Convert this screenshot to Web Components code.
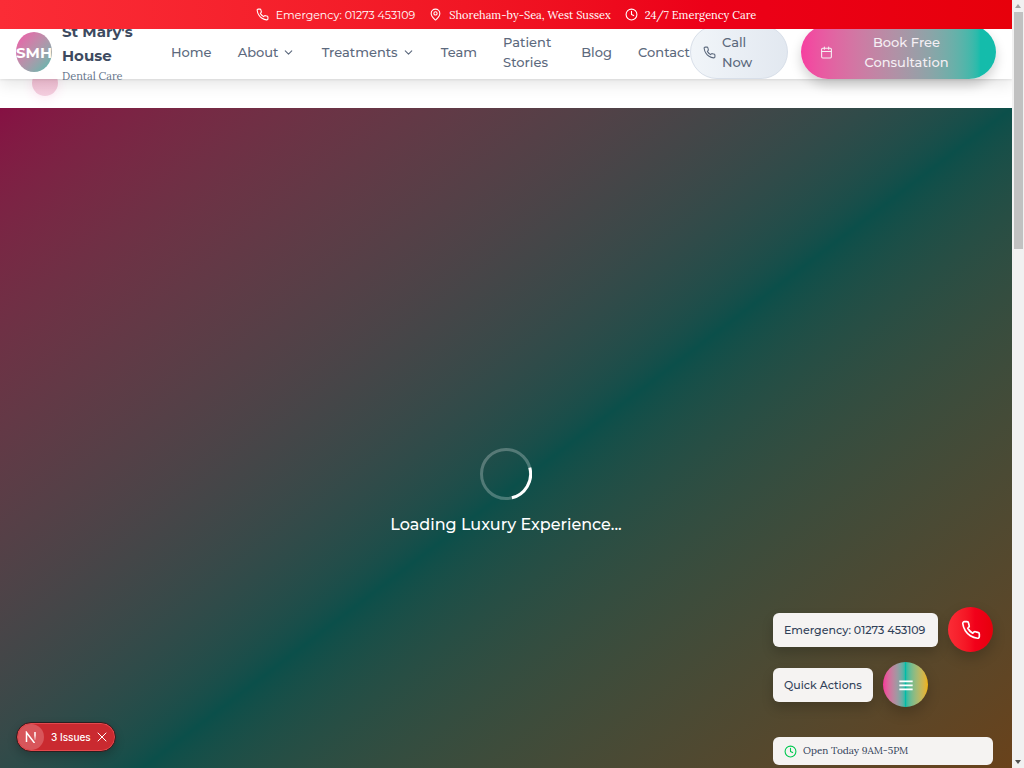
<!DOCTYPE html>
<html lang="en">
<head>
<meta charset="utf-8">
<meta name="viewport" content="width=device-width, initial-scale=1">
<title>St Mary's House Dental Care</title>
<style>
  :root {
    --sans: Montserrat, Inter, "Open Sans", sans-serif;
    --serif: Lora, "Liberation Serif", serif;
    --pink: #f6339a;
    --teal: #00bba7;
    --yellow: #f0b100;
  }
  body { margin: 0; background: #fff; font-family: var(--sans); color: #314158; }
</style>
</head>
<body>
<clinic-page></clinic-page>

<script>
const define = (name, markup, setup) => {
  customElements.define(name, class extends HTMLElement {
    constructor() {
      super();
      const t = document.createElement('template');
      t.innerHTML = markup;
      this.attachShadow({ mode: 'open' }).append(t.content.cloneNode(true));
    }
    connectedCallback() { if (setup) setup(this, this.shadowRoot); }
  });
};

const ICONS = {
  phone: '<path d="M22 16.92v3a2 2 0 0 1-2.18 2 19.8 19.8 0 0 1-8.63-3.07 19.5 19.5 0 0 1-6-6A19.8 19.8 0 0 1 2.12 4.18 2 2 0 0 1 4.11 2h3a2 2 0 0 1 2 1.72c.13.96.36 1.9.7 2.81a2 2 0 0 1-.45 2.11L8.09 9.91a16 16 0 0 0 6 6l1.27-1.27a2 2 0 0 1 2.11-.45c.91.34 1.85.57 2.81.7A2 2 0 0 1 22 16.92z"/>',
  pin: '<path d="M20 10c0 5-5.54 10.19-7.4 11.8a1 1 0 0 1-1.2 0C9.54 20.19 4 15 4 10a8 8 0 0 1 16 0"/><circle cx="12" cy="10" r="3"/>',
  clock: '<circle cx="12" cy="12" r="10"/><path d="M12 6v6l4 2"/>',
  calendar: '<path d="M8 2v4M16 2v4M3 10h18"/><rect x="3" y="4" width="18" height="18" rx="2"/>',
  chevron: '<path d="m6 9 6 6 6-6"/>',
  menu: '<path d="M2 6.5h20M2 12.5h20M2 18.5h20" stroke-width="2.6" stroke-linecap="butt"/>',
  close: '<path d="M4 4l16 16M20 4L4 20"/>'
};

define('ui-icon', `
  <style>
    :host { display: block; flex: none; width: 13px; height: 13px; }
    svg { display: block; width: 100%; height: 100%; fill: none; stroke: currentColor;
          stroke-width: 2; stroke-linecap: round; stroke-linejoin: round; }
  </style>
  <svg viewBox="0 0 24 24" aria-hidden="true"></svg>`,
  (el, root) => { root.querySelector('svg').innerHTML = ICONS[el.getAttribute('name')]; });

define('emergency-bar', `
  <style>
    :host { display: flex; align-items: center; justify-content: center; gap: 14px;
            position: relative; z-index: 3; height: 29px; color: #fff; font-size: 11px; line-height: 18px;
            background: linear-gradient(to right in oklab, #fb2c36, #ec0018 70%, #e7000b); }
    a, span { display: flex; align-items: center; gap: 7px; color: inherit; text-decoration: none; white-space: nowrap; }
    span { font-family: var(--serif); }
  </style>
  <a href="tel:01273453109"><ui-icon name="phone"></ui-icon>Emergency: 01273 453109</a>
  <span><ui-icon name="pin"></ui-icon>Shoreham-by-Sea, West Sussex</span>
  <span><ui-icon name="clock"></ui-icon>24/7 Emergency Care</span>`);

define('brand-logo', `
  <style>
    :host { display: block; }
    a { display: flex; align-items: center; gap: 10px; color: #3d4a60; text-decoration: none; }
    .mark { flex: none; display: grid; place-items: center; width: 36px; height: 40px; border-radius: 50%;
            background: linear-gradient(to bottom right in oklab, #f153a8, #3bbcad); color: #fff; font-size: 15px; font-weight: 700; }
    .name { width: 76px; font-size: 15px; font-weight: 700; line-height: 24px; }
    .sub { display: block; font-family: var(--serif); font-size: 11px; font-weight: 400; line-height: 16px; color: #66758c; }
  </style>
  <a href="#home"><span class="mark">SMH</span><span class="name">St Mary's House<span class="sub">Dental Care</span></span></a>`);

define('nav-item', `
  <style>
    :host { display: block; }
    a, button { display: flex; align-items: center; gap: 4px; margin: 0; padding: 0; border: 0; background: none;
      font: 500 13px/20px var(--sans); color: #5c697d; text-decoration: none; text-align: left; }
  </style>`,
  (el, root) => {
    if (root.querySelector('a, button')) return;
    const menu = el.hasAttribute('menu');
    const node = document.createElement(menu ? 'button' : 'a');
    if (menu) node.type = 'button'; else node.href = '#';
    node.innerHTML = '<span><slot></slot></span>' + (menu ? '<ui-icon name="chevron"></ui-icon>' : '');
    root.append(node);
  });

define('site-header', `
  <style>
    :host { box-sizing: border-box; display: grid; grid-template: 54px / 155px 1fr auto; align-items: center;
      position: relative; z-index: 2; height: 54px; margin-top: -4px; padding: 0 16px;
      background: rgba(255,255,255,.97); box-shadow: 0 4px 16px rgba(0,0,0,.12), 0 1px 2px rgba(0,0,0,.08); }
    nav, .cta { display: flex; align-items: center; }
    nav { justify-content: space-between; }
    .stories { width: 52px; }
    .cta { gap: 13px; }
  </style>
  <brand-logo></brand-logo>
  <nav aria-label="Main">
    <nav-item>Home</nav-item><nav-item menu>About</nav-item><nav-item menu>Treatments</nav-item>
    <nav-item>Team</nav-item><nav-item class="stories">Patient Stories</nav-item>
    <nav-item>Blog</nav-item><nav-item>Contact</nav-item>
  </nav>
  <div class="cta">
    <call-pill></call-pill><book-pill></book-pill>
  </div>`);

const pill = (icon, href, label, rules) => `
  <style>
    :host { display: block; }
    a { box-sizing: border-box; display: flex; align-items: center; height: 54px; border-radius: 27px;
        font: 500 13px/20px var(--sans); text-decoration: none; ${rules} }
    span { flex: 1; }
  </style>
  <a href="${href}"><ui-icon name="${icon}"></ui-icon><span>${label}</span></a>`;
define('call-pill', pill('phone', 'tel:01273453109', 'Call Now',
  'width: 98px; padding: 0 32px 0 12px; gap: 6px; border: 1px solid #d8dfe9; color: #5c697d; background: linear-gradient(to right in oklab, #f1f5f9, #e2e8f0);'));
define('book-pill', pill('calendar', '#book', 'Book Free Consultation',
  'width: 195px; padding: 0 44px 0 19px; gap: 28px; color: #f5eff4; text-align: center; background: linear-gradient(to right in oklab, #f63fa0, #14bcab 92%); box-shadow: 0 6px 12px rgba(0,0,0,.18);'));

define('loading-hero', `
  <style>
    :host { display: flex; flex-direction: column; align-items: center; justify-content: center; gap: 13px;
      flex: none; height: 100vh; margin-top: 29px; color: #fff;
      background: linear-gradient(to bottom right in oklab, #861043, #0b4f4a, #733e0a); }
    .ring { width: 52px; height: 52px; }
    p { margin: 0; font-size: 16px; font-weight: 500; line-height: 24px; }
  </style>
  <svg class="ring" viewBox="0 0 52 52" fill="none" stroke="#fff" stroke-width="3" aria-hidden="true">
    <circle cx="26" cy="26" r="24.5" stroke-opacity=".25"/>
    <path d="M49.8 19.6A24.5 24.5 0 0 1 31.9 49.8"/>
  </svg>
  <p role="status">Loading Luxury Experience...</p>`);

define('quick-contact', `
  <style>
    :host { display: flex; flex-direction: column; gap: 10px; width: 220px; }
    .row { display: flex; align-items: center; gap: 10px; }
    .label { box-sizing: border-box; padding: 7px 11px; border-radius: 6px; background: #f5f3f2; white-space: nowrap;
      font-size: 11px; font-weight: 500; line-height: 20px; box-shadow: 0 6px 12px rgba(0,0,0,.18); }
    .wide { width: 165px; } .short { width: 100px; }
    a, button { flex: none; display: grid; place-items: center; width: 45px; height: 45px; padding: 0; border: 0;
      border-radius: 50%; color: #fff; box-shadow: 0 6px 14px rgba(0,0,0,.2); }
    a { background: linear-gradient(to right in oklab, #fb2c36, #f2001a 60%, #e7000b); }
    a ui-icon { width: 20px; height: 20px; }
    button { background: linear-gradient(to right in oklab, var(--pink), var(--teal), var(--yellow)); }
    button ui-icon { width: 16px; height: 16px; }
    .hours { display: flex; align-items: center; gap: 6px; margin-top: 20px; padding: 4px 11px; border-radius: 6px;
      background: #f5f3f2; font-family: var(--serif); font-size: 10px; line-height: 20px; }
    .hours ui-icon { color: #00c950; }
  </style>
  <div class="row"><span class="label wide">Emergency: 01273 453109</span>
    <a href="tel:01273453109" aria-label="Call emergency line"><ui-icon name="phone"></ui-icon></a></div>
  <div class="row"><span class="label short">Quick Actions</span>
    <button type="button" aria-label="Open quick actions"><ui-icon name="menu"></ui-icon></button></div>
  <div class="hours"><ui-icon name="clock"></ui-icon>Open Today 9AM-5PM</div>`);

define('issues-badge', `
  <style>
    :host { box-sizing: border-box; display: flex; align-items: center; width: 100px; height: 30px; padding: 1px;
      border: 1px solid #2b1f20; border-radius: 15px; background: #ca2a30; color: #fff;
      box-shadow: inset 0 0 0 1px #e5484d, 0 4px 10px rgba(0,0,0,.2); }
    button { display: flex; align-items: center; height: 26px; padding: 0; border: 0; background: none; color: inherit;
      font: 500 10px/16px Inter, sans-serif; }
    .open { gap: 7px; flex: 1; white-space: nowrap; }
    .mark { display: grid; place-items: center; width: 26px; height: 26px; border-radius: 50%; background: #d8565b; }
    .mark svg { display: block; width: 12px; height: 12px; }
    .close { justify-content: center; width: 28px; }
    ui-icon { width: 12px; height: 12px; }
  </style>
  <button class="open" type="button"><span class="mark">
    <svg viewBox="0 0 12 12" fill="none" stroke="#fff" stroke-width="1.5" aria-hidden="true">
      <defs><linearGradient id="fade" gradientUnits="userSpaceOnUse" x1="0" y1="1" x2="0" y2="9"><stop offset=".4" stop-color="#fff"/><stop offset="1" stop-color="#fff" stop-opacity=".2"/></linearGradient></defs>
      <path d="M1.5 11V1.5L9.5 12"/><path d="M10 1V9" stroke="url(#fade)"/>
    </svg></span><span>3 Issues</span></button>
  <button class="close" type="button" aria-label="Dismiss"><ui-icon name="close"></ui-icon></button>`);

define('scroll-rail', `
  <style>
    :host { display: flex; flex-direction: column; align-items: center; background: #f1f1f1; }
    i { display: block; width: 0; height: 0; border: 3px solid transparent; }
    .up { margin: 4px 0; border-top: 0; border-bottom: 4px solid #a3a3a3; }
    .thumb { width: 9px; height: 237px; background: #c1c1c1; }
    .down { margin: auto 0 4px; border-bottom: 0; border-top: 4px solid #505050; }
  </style>
  <i class="up"></i><div class="thumb"></div><i class="down"></i>`);

define('clinic-page', `
  <style>
    :host { display: grid; grid-template-columns: 1fr 12px; height: 100vh; overflow: hidden; }
    .view { position: relative; display: flex; flex-direction: column; min-width: 0; overflow: hidden; }
    emergency-bar, site-header { flex: none; }
    .orb { position: absolute; left: 32px; top: 70px; width: 26px; height: 26px; border-radius: 50%;
      background: linear-gradient(#f3b6cd, #f4cfe0); box-shadow: 0 2px 12px rgba(246,51,154,.12); }
    quick-contact { position: absolute; right: 19px; bottom: 3px; }
    issues-badge { position: absolute; left: 16px; bottom: 16px; }
  </style>
  <div class="view">
    <emergency-bar></emergency-bar>
    <site-header></site-header>
    <div class="orb"></div>
    <loading-hero></loading-hero>
    <quick-contact></quick-contact>
    <issues-badge></issues-badge>
  </div>
  <scroll-rail aria-hidden="true"></scroll-rail>`);
</script>
</body>
</html>
